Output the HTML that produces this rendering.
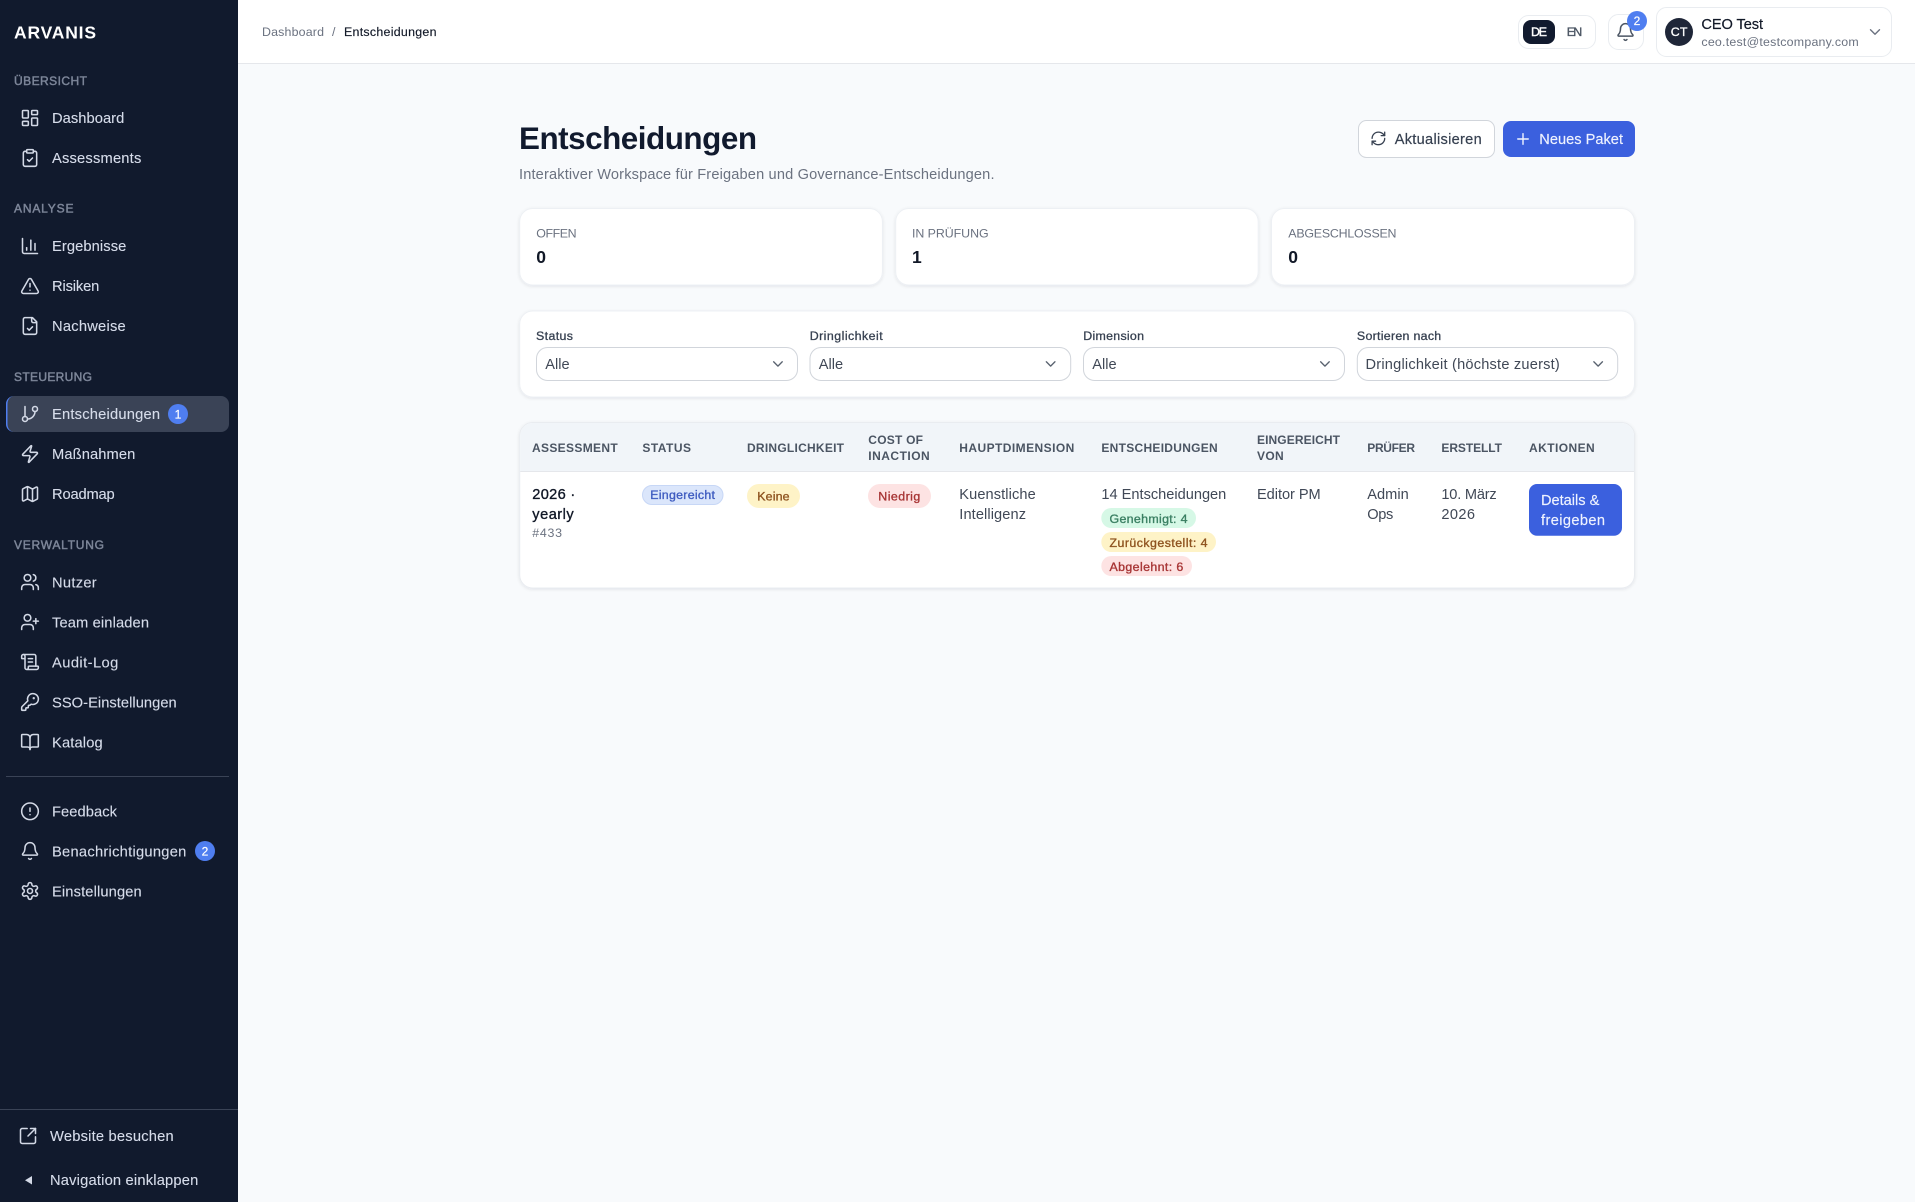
<!DOCTYPE html>
<html lang="de">
<head>
<meta charset="utf-8">
<title>Entscheidungen</title>
<style>
html,body{margin:0;padding:0;width:1915px;height:1202px;overflow:hidden;background:#f8fafc}
svg{display:block;font-family:"Liberation Sans",sans-serif}
text{white-space:pre}
.ic{fill:none;stroke-width:1.85;stroke-linecap:round;stroke-linejoin:round}
.sb{stroke:#d3d9e6}
.nav{font-size:14.7px;fill:#d6dcea;stroke:#d6dcea;stroke-width:.12}
.sec{font-size:12px;fill:#7d8699;stroke:#7d8699;stroke-width:.45}
.badge{font-size:12px;fill:#fff;text-anchor:middle;stroke:#fff;stroke-width:.2}
.th{font-size:12px;font-weight:700;fill:#4b5563}
.td{font-size:14.6px;fill:#404856}
.lab{font-size:12.4px;fill:#6b7280}
.flab{font-size:12.4px;fill:#374151;stroke:#374151;stroke-width:.3}
.val{font-size:17.5px;font-weight:700;fill:#111827}
.sel{font-size:14.6px;fill:#404856}
.pill{font-size:12.4px;stroke-width:.35}
</style>
</head>
<body>
<svg width="1915" height="1202" viewBox="0 0 1915 1202" xmlns="http://www.w3.org/2000/svg">
<defs>
<filter id="s" x="-5%" y="-10%" width="110%" height="125%"><feDropShadow dx="0" dy="1" stdDeviation="1.6" flood-color="#0f172a" flood-opacity=".09"/></filter>
</defs>

<!-- page background -->
<rect width="1915" height="1202" fill="#f8fafc"/>

<!-- top bar -->
<rect x="238" y="0" width="1677" height="63" fill="#fff"/>
<rect x="238" y="63" width="1677" height="1" fill="#e5e7eb"/>
<text x="262" y="36" font-size="12.4" fill="#6b7280" textLength="62">Dashboard</text>
<text x="332" y="36" font-size="12.4" fill="#6b7280">/</text>
<text x="344" y="36" font-size="12.4" fill="#111827" stroke="#111827" stroke-width=".15" textLength="92.5">Entscheidungen</text>

<rect x="1518.5" y="15.5" width="77" height="33" rx="10" fill="#fff" stroke="#e9ecf0"/>
<rect x="1523" y="20" width="32" height="24" rx="8" fill="#111a2e"/>
<text x="1531" y="36.2" font-size="12.4" fill="#fff" stroke="#fff" stroke-width=".4" textLength="16">DE</text>
<text x="1566.7" y="36.2" font-size="12.4" fill="#4b5563" stroke="#4b5563" stroke-width=".35" textLength="15.5">EN</text>

<rect x="1608.5" y="14.5" width="35" height="35" rx="10" fill="#fff" stroke="#e9ecf0"/>
<g class="ic" stroke="#4b5563" transform="translate(1615.5,22) scale(.8333)"><path d="M10.268 21a2 2 0 0 0 3.464 0"/><path d="M3.262 15.326A1 1 0 0 0 4 17h16a1 1 0 0 0 .74-1.673C19.41 13.956 18 12.499 18 8A6 6 0 0 0 6 8c0 4.499-1.411 5.956-2.738 7.326"/></g>
<circle cx="1637" cy="21" r="10" fill="#4f7ef0"/>
<text x="1637" y="25.2" class="badge">2</text>

<rect x="1656.5" y="7.5" width="235" height="49" rx="10" fill="#fff" stroke="#e9ecf0"/>
<circle cx="1679" cy="32" r="14" fill="#1f2638"/>
<text x="1670.7" y="36.2" font-size="12.4" fill="#fff" stroke="#fff" stroke-width=".3" textLength="16.8">CT</text>
<text x="1701.4" y="29" font-size="14.6" fill="#111827" stroke="#111827" stroke-width=".2" textLength="61.6">CEO Test</text>
<text x="1701.4" y="46" font-size="12.4" fill="#6b7280" textLength="157.3">ceo.test@testcompany.com</text>
<g class="ic" stroke="#6b7280" transform="translate(1866,23) scale(.75)"><path d="m6 9 6 6 6-6"/></g>

<!-- page header -->
<text x="519" y="149" font-size="31.4" font-weight="700" fill="#111a2e" textLength="238">Entscheidungen</text>
<text x="519" y="179" font-size="14.6" fill="#6b7280" textLength="475.5">Interaktiver Workspace für Freigaben und Governance-Entscheidungen.</text>

<rect x="1358.5" y="120.5" width="136" height="37" rx="8" fill="#fff" stroke="#d1d5db"/>
<g class="ic" stroke="#374151" transform="translate(1370,130) scale(.7)"><path d="M3 12a9 9 0 0 1 9-9 9.75 9.75 0 0 1 6.74 2.74L21 8"/><path d="M21 3v5h-5"/><path d="M21 12a9 9 0 0 1-9 9 9.75 9.75 0 0 1-6.74-2.74L3 16"/><path d="M8 16H3v5"/></g>
<text x="1394.7" y="144" font-size="14.6" fill="#374151" stroke="#374151" stroke-width=".2" textLength="87">Aktualisieren</text>

<rect x="1503" y="121" width="132" height="36" rx="8" fill="#3b60de"/>
<g class="ic" stroke="#f1f5ff" transform="translate(1514,130) scale(.75)"><path d="M5 12h14"/><path d="M12 5v14"/></g>
<text x="1539.3" y="144" font-size="14.6" fill="#eef2ff" stroke="#eef2ff" stroke-width=".15" textLength="83.7">Neues Paket</text>

<!-- stat cards -->
<g filter="url(#s)">
<rect x="519.7" y="208.5" width="362.7" height="76.5" rx="13" fill="#fff" stroke="#edf0f4"/>
<rect x="895.7" y="208.5" width="362.5" height="76.5" rx="13" fill="#fff" stroke="#edf0f4"/>
<rect x="1271.5" y="208.5" width="363" height="76.5" rx="13" fill="#fff" stroke="#edf0f4"/>
</g>
<text x="536.3" y="237.7" class="lab" textLength="40.3">OFFEN</text>
<text x="536.3" y="262.8" class="val">0</text>
<text x="912" y="237.7" class="lab" textLength="76.6">IN PRÜFUNG</text>
<text x="912" y="262.8" class="val">1</text>
<text x="1288.3" y="237.7" class="lab" textLength="108.2">ABGESCHLOSSEN</text>
<text x="1288.3" y="262.8" class="val">0</text>

<!-- filters -->
<rect x="519.7" y="311" width="1114.8" height="86" rx="13" fill="#fff" stroke="#edf0f4" filter="url(#s)"/>
<text x="536" y="340" class="flab" textLength="37">Status</text>
<text x="809.7" y="340" class="flab" textLength="73">Dringlichkeit</text>
<text x="1083.3" y="340" class="flab" textLength="60.7">Dimension</text>
<text x="1356.9" y="340" class="flab" textLength="84.3">Sortieren nach</text>
<g fill="#fff" stroke="#d1d5db">
<rect x="536.5" y="347.5" width="261" height="33" rx="11"/>
<rect x="810" y="347.5" width="260.7" height="33" rx="11"/>
<rect x="1083.5" y="347.5" width="261" height="33" rx="11"/>
<rect x="1357.3" y="347.5" width="260.4" height="33" rx="11"/>
</g>
<text x="545.3" y="369" class="sel" textLength="24.3">Alle</text>
<text x="818.8" y="369" class="sel" textLength="24.3">Alle</text>
<text x="1092.3" y="369" class="sel" textLength="24.3">Alle</text>
<text x="1365.5" y="369" class="sel" textLength="194.3">Dringlichkeit (höchste zuerst)</text>
<g class="ic" stroke="#59626f">
<path transform="translate(769.3,355.3) scale(.72)" d="m6 9 6 6 6-6"/>
<path transform="translate(1042,355.3) scale(.72)" d="m6 9 6 6 6-6"/>
<path transform="translate(1316.3,355.3) scale(.72)" d="m6 9 6 6 6-6"/>
<path transform="translate(1589.5,355.3) scale(.72)" d="m6 9 6 6 6-6"/>
</g>

<!-- table -->
<rect x="519.7" y="422.5" width="1114.8" height="165.5" rx="13" fill="#fff" stroke="#e9ecf0" filter="url(#s)"/>
<path d="M520.2 471.5V435.5a12.5 12.5 0 0 1 12.5-12.5H1621.5a12.5 12.5 0 0 1 12.5 12.5V471.5z" fill="#f1f5f9"/>
<rect x="520.2" y="471" width="1113.8" height="1" fill="#e5e7eb"/>
<text x="532" y="452" class="th" textLength="85.7">ASSESSMENT</text>
<text x="642.4" y="452" class="th" textLength="48.6">STATUS</text>
<text x="747" y="452" class="th" textLength="97">DRINGLICHKEIT</text>
<text x="868.3" y="444" class="th" textLength="54.7">COST OF</text>
<text x="868.3" y="460" class="th" textLength="61.4">INACTION</text>
<text x="959.3" y="452" class="th" textLength="115">HAUPTDIMENSION</text>
<text x="1101.4" y="452" class="th" textLength="116.3">ENTSCHEIDUNGEN</text>
<text x="1257" y="444" class="th" textLength="83">EINGEREICHT</text>
<text x="1257" y="460" class="th" textLength="26.7">VON</text>
<text x="1367.3" y="452" class="th" textLength="47.7">PRÜFER</text>
<text x="1441.4" y="452" class="th" textLength="60.6">ERSTELLT</text>
<text x="1529" y="452" class="th" textLength="65.7">AKTIONEN</text>

<text x="532.3" y="499" font-size="14.6" fill="#111827" stroke="#111827" stroke-width=".35" textLength="43">2026 ·</text>
<text x="532.3" y="519" font-size="14.6" fill="#111827" stroke="#111827" stroke-width=".35" textLength="41.4">yearly</text>
<text x="532.3" y="537" font-size="12.4" fill="#6b7280" textLength="29.7">#433</text>

<rect x="642.5" y="485.5" width="80.5" height="19" rx="9.5" fill="#dbe6fb" stroke="#c7d7f6"/>
<text x="650.2" y="498.8" class="pill" fill="#3f5cc0" stroke="#3f5cc0" textLength="64.8">Eingereicht</text>
<rect x="747" y="484" width="53" height="24" rx="12" fill="#fef3c7"/>
<text x="757.3" y="500.6" class="pill" fill="#8f5420" stroke="#8f5420" textLength="32.2">Keine</text>
<rect x="868" y="484" width="63" height="24" rx="12" fill="#fde3e3"/>
<text x="878.3" y="500.6" class="pill" fill="#a83636" stroke="#a83636" textLength="42">Niedrig</text>

<text x="959.3" y="499" class="td" textLength="76.4">Kuenstliche</text>
<text x="959.3" y="519" class="td" textLength="66.7">Intelligenz</text>
<text x="1101.4" y="499" class="td" textLength="124.9">14 Entscheidungen</text>

<rect x="1101.3" y="508" width="94.7" height="20" rx="10" fill="#d6f8e6"/>
<text x="1109.5" y="523" class="pill" fill="#3a7f62" stroke="#3a7f62" textLength="78">Genehmigt: 4</text>
<rect x="1101.3" y="532" width="114.7" height="20" rx="10" fill="#fef3c7"/>
<text x="1109.5" y="547" class="pill" fill="#8f5420" stroke="#8f5420" textLength="98">Zurückgestellt: 4</text>
<rect x="1101.3" y="556" width="90.7" height="20" rx="10" fill="#fde3e3"/>
<text x="1109.5" y="571" class="pill" fill="#a83636" stroke="#a83636" textLength="73.8">Abgelehnt: 6</text>

<text x="1257" y="499" class="td" textLength="63.7">Editor PM</text>
<text x="1367.3" y="499" class="td" textLength="41.4">Admin</text>
<text x="1367.3" y="519" class="td" textLength="26">Ops</text>
<text x="1441.4" y="499" class="td" textLength="55.3">10. März</text>
<text x="1441.4" y="519" class="td" textLength="33.6">2026</text>

<rect x="1529" y="484" width="93" height="51.7" rx="8" fill="#3b60de"/>
<text x="1541" y="505" font-size="14.6" fill="#eef2ff" stroke="#eef2ff" stroke-width=".15" textLength="58.3">Details &amp;</text>
<text x="1541" y="525" font-size="14.6" fill="#eef2ff" stroke="#eef2ff" stroke-width=".15" textLength="64">freigeben</text>

<!-- sidebar -->
<rect x="0" y="0" width="238" height="1202" fill="#111a2d"/>
<text x="14" y="38.4" font-size="17.5" font-weight="700" fill="#fff" textLength="82">ARVANIS</text>

<text x="14" y="85" class="sec" textLength="73">ÜBERSICHT</text>
<text x="14" y="212.6" class="sec" textLength="59.5">ANALYSE</text>
<text x="14" y="381" class="sec" textLength="78">STEUERUNG</text>
<text x="14" y="549" class="sec" textLength="90">VERWALTUNG</text>

<rect x="6" y="396" width="223" height="36" rx="8" fill="#3a4356"/>
<path d="M14 396a8 8 0 0 0-8 8v20a8 8 0 0 0 8 8a6.5 8 0 0 1-6.5-8v-20a6.5 8 0 0 1 6.5-8z" fill="#4f7ef0"/>

<!-- nav icons -->
<g class="ic sb">
<g transform="translate(20,108) scale(.8333)"><rect x="3" y="3" width="7" height="9" rx="1"/><rect x="14" y="3" width="7" height="5" rx="1"/><rect x="14" y="12" width="7" height="9" rx="1"/><rect x="3" y="16" width="7" height="5" rx="1"/></g>
<g transform="translate(20,148) scale(.8333)"><rect x="8" y="2" width="8" height="4" rx="1"/><path d="M16 4h2a2 2 0 0 1 2 2v14a2 2 0 0 1-2 2H6a2 2 0 0 1-2-2V6a2 2 0 0 1 2-2h2"/><path d="m9 14 2 2 4-4"/></g>
<g transform="translate(20,236) scale(.8333)"><path d="M3 3v16a2 2 0 0 0 2 2h16"/><path d="M18 17V9"/><path d="M13 17V5"/><path d="M8 17v-3"/></g>
<g transform="translate(20,276) scale(.8333)"><path d="m21.73 18-8-14a2 2 0 0 0-3.48 0l-8 14A2 2 0 0 0 4 21h16a2 2 0 0 0 1.73-3"/><path d="M12 9v4"/><path d="M12 17h.01"/></g>
<g transform="translate(20,316) scale(.8333)"><path d="M15 2H6a2 2 0 0 0-2 2v16a2 2 0 0 0 2 2h12a2 2 0 0 0 2-2V7Z"/><path d="M14 2v4a2 2 0 0 0 2 2h4"/><path d="m9 15 2 2 4-4"/></g>
<g transform="translate(20,404) scale(.8333)"><line x1="6" x2="6" y1="3" y2="15"/><circle cx="18" cy="6" r="3"/><circle cx="6" cy="18" r="3"/><path d="M18 9a9 9 0 0 1-9 9"/></g>
<g transform="translate(20,444) scale(.8333)"><path d="M4 14a1 1 0 0 1-.78-1.63l9.9-10.2a.5.5 0 0 1 .86.46l-1.92 6.02A1 1 0 0 0 13 10h7a1 1 0 0 1 .78 1.63l-9.9 10.2a.5.5 0 0 1-.86-.46l1.92-6.02A1 1 0 0 0 11 14z"/></g>
<g transform="translate(20,484) scale(.8333)"><path d="M14.106 5.553a2 2 0 0 0 1.788 0l3.659-1.83A1 1 0 0 1 21 4.619v12.764a1 1 0 0 1-.553.894l-4.553 2.277a2 2 0 0 1-1.788 0l-4.212-2.106a2 2 0 0 0-1.788 0l-3.659 1.83A1 1 0 0 1 3 19.381V6.618a1 1 0 0 1 .553-.894l4.553-2.277a2 2 0 0 1 1.788 0z"/><path d="M15 5.764v15"/><path d="M9 3.236v15"/></g>
<g transform="translate(20,572) scale(.8333)"><path d="M16 21v-2a4 4 0 0 0-4-4H6a4 4 0 0 0-4 4v2"/><circle cx="9" cy="7" r="4"/><path d="M22 21v-2a4 4 0 0 0-3-3.87"/><path d="M16 3.13a4 4 0 0 1 0 7.75"/></g>
<g transform="translate(20,612) scale(.8333)"><path d="M16 21v-2a4 4 0 0 0-4-4H6a4 4 0 0 0-4 4v2"/><circle cx="9" cy="7" r="4"/><line x1="19" x2="19" y1="8" y2="14"/><line x1="22" x2="16" y1="11" y2="11"/></g>
<g transform="translate(20,652) scale(.8333)"><path d="M15 12h-5"/><path d="M15 8h-5"/><path d="M19 17V5a2 2 0 0 0-2-2H4"/><path d="M8 21h12a2 2 0 0 0 2-2v-1a1 1 0 0 0-1-1H11a1 1 0 0 0-1 1v1a2 2 0 1 1-4 0V5a2 2 0 1 0-4 0v2a1 1 0 0 0 1 1h3"/></g>
<g transform="translate(20,692) scale(.8333)"><path d="M2.586 17.414A2 2 0 0 0 2 18.828V21a1 1 0 0 0 1 1h3a1 1 0 0 0 1-1v-1a1 1 0 0 1 1-1h1a1 1 0 0 0 1-1v-1a1 1 0 0 1 1-1h.172a2 2 0 0 0 1.414-.586l.814-.814a6.5 6.5 0 1 0-4-4z"/><circle cx="16.5" cy="7.5" r=".5" fill="#d3d9e6"/></g>
<g transform="translate(20,732) scale(.8333)"><path d="M12 7v14"/><path d="M3 18a1 1 0 0 1-1-1V4a1 1 0 0 1 1-1h5a4 4 0 0 1 4 4 4 4 0 0 1 4-4h5a1 1 0 0 1 1 1v13a1 1 0 0 1-1 1h-6a3 3 0 0 0-3 3 3 3 0 0 0-3-3z"/></g>
<g transform="translate(20,801.3) scale(.8333)"><circle cx="12" cy="12" r="10"/><line x1="12" x2="12" y1="8" y2="12"/><line x1="12" x2="12.01" y1="16" y2="16"/></g>
<g transform="translate(20,841) scale(.8333)"><path d="M10.268 21a2 2 0 0 0 3.464 0"/><path d="M3.262 15.326A1 1 0 0 0 4 17h16a1 1 0 0 0 .74-1.673C19.41 13.956 18 12.499 18 8A6 6 0 0 0 6 8c0 4.499-1.411 5.956-2.738 7.326"/></g>
<g transform="translate(20,881) scale(.8333)"><path d="M12.22 2h-.44a2 2 0 0 0-2 2v.18a2 2 0 0 1-1 1.73l-.43.25a2 2 0 0 1-2 0l-.15-.08a2 2 0 0 0-2.73.73l-.22.38a2 2 0 0 0 .73 2.73l.15.1a2 2 0 0 1 1 1.72v.51a2 2 0 0 1-1 1.74l-.15.09a2 2 0 0 0-.73 2.73l.22.38a2 2 0 0 0 2.73.73l.15-.08a2 2 0 0 1 2 0l.43.25a2 2 0 0 1 1 1.73V20a2 2 0 0 0 2 2h.44a2 2 0 0 0 2-2v-.18a2 2 0 0 1 1-1.73l.43-.25a2 2 0 0 1 2 0l.15.08a2 2 0 0 0 2.73-.73l.22-.39a2 2 0 0 0-.73-2.73l-.15-.08a2 2 0 0 1-1-1.74v-.5a2 2 0 0 1 1-1.74l.15-.09a2 2 0 0 0 .73-2.73l-.22-.38a2 2 0 0 0-2.73-.73l-.15.08a2 2 0 0 1-2 0l-.43-.25a2 2 0 0 1-1-1.73V4a2 2 0 0 0-2-2z"/><circle cx="12" cy="12" r="3"/></g>
<g transform="translate(18,1126) scale(.8333)"><path d="M21 13v6a2 2 0 0 1-2 2H5a2 2 0 0 1-2-2V5a2 2 0 0 1 2-2h6"/><path d="m21 3-9 9"/><path d="M15 3h6v6"/></g>
</g>

<!-- nav labels -->
<text x="52" y="122.9" class="nav" textLength="72.3">Dashboard</text>
<text x="52" y="162.9" class="nav" textLength="89.3">Assessments</text>
<text x="52" y="250.9" class="nav" textLength="74.3">Ergebnisse</text>
<text x="52" y="290.9" class="nav" textLength="47.3">Risiken</text>
<text x="52" y="330.9" class="nav" textLength="73.7">Nachweise</text>
<text x="52" y="418.9" class="nav" textLength="108">Entscheidungen</text>
<circle cx="178" cy="414" r="10" fill="#4f7ef0"/>
<text x="178" y="418.3" class="badge">1</text>
<text x="52" y="458.9" class="nav" textLength="83.3">Maßnahmen</text>
<text x="52" y="498.9" class="nav" textLength="62.7">Roadmap</text>
<text x="52" y="587.3" class="nav" textLength="44.7">Nutzer</text>
<text x="52" y="627.3" class="nav" textLength="97">Team einladen</text>
<text x="52" y="667.3" class="nav" textLength="66.3">Audit-Log</text>
<text x="52" y="707.3" class="nav" textLength="124.7">SSO-Einstellungen</text>
<text x="52" y="747.3" class="nav" textLength="50.7">Katalog</text>
<rect x="6" y="776" width="223" height="1" fill="#3a4356"/>
<text x="52" y="816.3" class="nav" textLength="65">Feedback</text>
<text x="52" y="856.3" class="nav" textLength="134.3">Benachrichtigungen</text>
<circle cx="205" cy="851" r="10" fill="#4f7ef0"/>
<text x="205" y="855.3" class="badge">2</text>
<text x="52" y="896.3" class="nav" textLength="89.7">Einstellungen</text>

<rect x="0" y="1109" width="238" height="1" fill="#3a4356"/>
<text x="50" y="1141" class="nav" textLength="123.7">Website besuchen</text>
<polygon points="32,1176 32,1184.5 25,1180.2" fill="#d3d9e6"/>
<text x="50" y="1185" class="nav" textLength="148.3">Navigation einklappen</text>
</svg>
</body>
</html>
